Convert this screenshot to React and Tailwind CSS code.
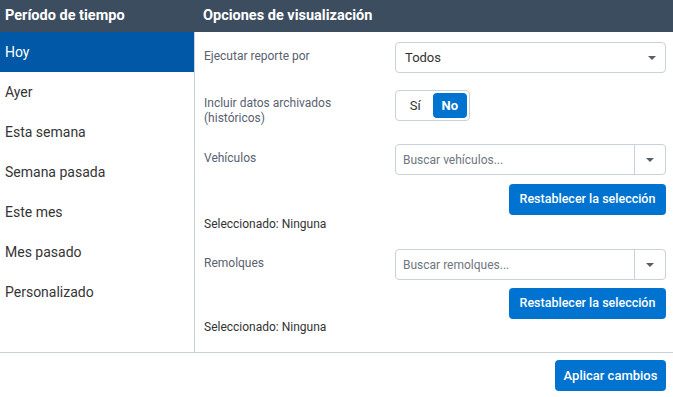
import { useState } from "react";

const periods = ["Hoy", "Ayer", "Esta semana", "Semana pasada", "Este mes", "Mes pasado", "Personalizado"];

function Caret() {
  return (
    <svg width="8" height="4" viewBox="0 0 8 4" className="text-[#565e6a]">
      <path d="M0 0h8L4 4z" fill="currentColor" />
    </svg>
  );
}

function SearchBox({ placeholder }) {
  return (
    <div className="flex h-[31px] w-[271px] rounded border border-[#c9d1da] bg-white">
      <div className="flex flex-1 items-center pl-[7px] text-[12px] text-[#6f7680]">{placeholder}</div>
      <div className="flex w-[31px] items-center justify-center border-l border-[#c9d1da]">
        <Caret />
      </div>
    </div>
  );
}

function ResetButton() {
  return (
    <button
      type="button"
      className="ml-auto flex h-[31px] w-[157px] items-center justify-center rounded bg-[#0073d0] text-[12.5px] font-medium text-white"
    >
      Restablecer la selección
    </button>
  );
}

export default function App() {
  const [period, setPeriod] = useState("Hoy");
  const [archived, setArchived] = useState(false);

  return (
    <div className="flex h-[397px] w-[673px] flex-col bg-white font-['Roboto',sans-serif] text-[#333]">
      {/* header */}
      <div className="flex h-8 bg-[#3c4d5f] text-[14.5px] font-bold text-white">
        <div className="flex w-[195px] items-center pl-[5px]">Período de tiempo</div>
        <div className="flex flex-1 items-center pl-2">Opciones de visualización</div>
      </div>

      <div className="flex h-[320px]">
        {/* periods */}
        <ul className="w-[195px] border-r border-[#c5d0db]">
          {periods.map((p) => (
            <li
              key={p}
              onClick={() => setPeriod(p)}
              className={
                period === p
                  ? "flex h-10 items-center bg-[#0058a6] pl-[5px] text-[14px] text-white"
                  : "flex h-10 items-center pl-[5px] text-[14px] text-[#353535]"
              }
            >
              {p}
            </li>
          ))}
        </ul>

        {/* options */}
        <div className="flex flex-1 flex-col pl-[9px] pr-[7px] pt-[10px] text-[12px]">
          <div className="flex">
            <div className="w-[191px] pt-[6px] leading-4 text-[#5a6170]">Ejecutar reporte por</div>
            <div className="flex h-[31px] w-[271px] items-center justify-between rounded border border-[#c9d1da] pl-[9px] pr-[9px] text-[13px] text-[#333]">
              Todos
              <Caret />
            </div>
          </div>

          <div className="mt-[17px] flex h-[31px]">
            <div className="w-[191px] pt-[6px] leading-[15px] text-[#5a6170]">
              Incluir datos archivados
              <br />
              (históricos)
            </div>
            <div className="flex h-[31px] w-[75px] items-center rounded border border-[#c9d1da] p-[2px]">
              <button
                type="button"
                onClick={() => setArchived(true)}
                className={
                  archived
                    ? "h-[25px] w-[35px] rounded bg-[#0073d0] text-[13px] font-bold text-white"
                    : "h-[25px] w-[35px] text-[13px] text-[#333]"
                }
              >
                Sí
              </button>
              <button
                type="button"
                onClick={() => setArchived(false)}
                className={
                  archived
                    ? "h-[25px] w-[35px] text-[13px] text-[#333]"
                    : "h-[25px] w-[35px] rounded bg-[#0073d0] text-[13px] font-bold text-white"
                }
              >
                No
              </button>
            </div>
          </div>

          <div className="mt-[23px] flex">
            <div className="w-[191px] pt-[6px] leading-4 text-[#5a6170]">Vehículos</div>
            <SearchBox placeholder="Buscar vehículos..." />
          </div>
          <div className="mt-[9px] flex">
            <ResetButton />
          </div>
          <div className="mt-[1px] leading-4 text-[#333]">Seleccionado: Ninguna</div>

          <div className="mt-[17px] flex">
            <div className="w-[191px] pt-[6px] leading-4 text-[#5a6170]">Remolques</div>
            <SearchBox placeholder="Buscar remolques..." />
          </div>
          <div className="mt-[8px] flex">
            <ResetButton />
          </div>
          <div className="leading-4 text-[#333]">Seleccionado: Ninguna</div>
        </div>
      </div>

      {/* footer */}
      <div className="flex flex-1 justify-end border-t border-[#c5d0db] pr-[7px] pt-[7px]">
        <button
          type="button"
          className="h-[31px] w-[111px] rounded bg-[#0073d0] text-[13px] font-medium text-white"
        >
          Aplicar cambios
        </button>
      </div>
    </div>
  );
}
